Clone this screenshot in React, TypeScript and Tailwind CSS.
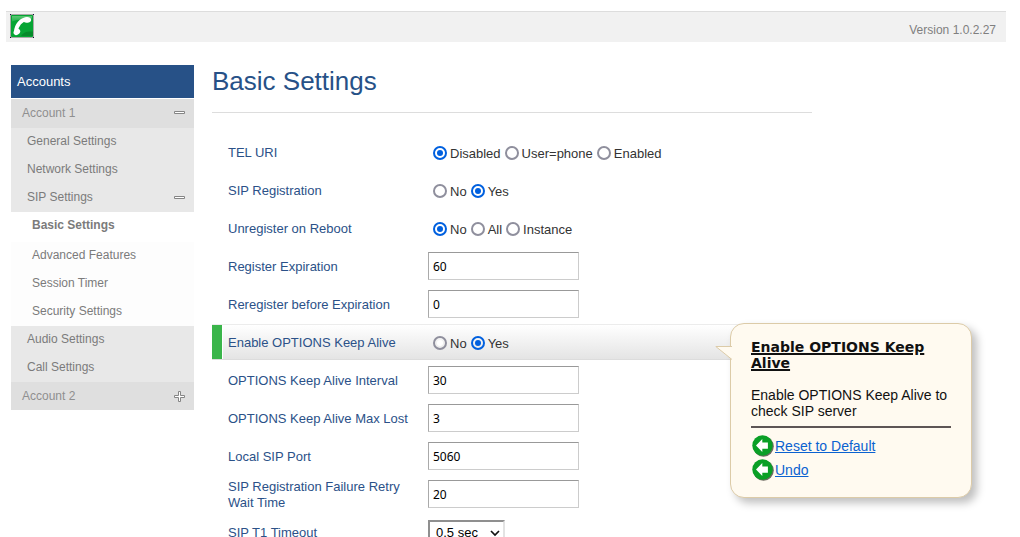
import { useState } from "react";
import type { ReactNode } from "react";

const SANS = "font-['Liberation_Sans',Arial,sans-serif]";

function PhoneLogo() {
  return (
    <svg viewBox="0 0 24 24" className="block size-6" role="img" aria-label="Phone">
      <defs>
        <linearGradient id="logo-shine" x1="0" y1="0" x2="0" y2="1">
          <stop offset="0" stopColor="#5cc873" />
          <stop offset="1" stopColor="#22b14c" />
        </linearGradient>
      </defs>
      <rect width="24" height="24" fill="#111136" />
      <path d="M1 0h22v1h1v22h-1v1H1v-1H0V1h1z" fill="#a9aaa6" />
      <rect x="1" y="1" width="22" height="22" rx="1" fill="#06a534" />
      <path d="M2 2h20v2.500c-5 1-14 .5-20 3z" fill="url(#logo-shine)" />
      <path d="M11 22c2-4 7-5 12-4.500V22z" fill="#058a2a" />
      <path d="M17 5C11 5.500 6.500 11 6 17.500" fill="none" stroke="#fff" strokeWidth="4" strokeLinecap="round" />
      <ellipse cx="17.300" cy="6" rx="3.900" ry="2.700" transform="rotate(-12 17.300 6)" fill="#fff" />
      <ellipse cx="6.900" cy="18" rx="3.600" ry="2.600" transform="rotate(-35 6.900 18)" fill="#fff" />
    </svg>
  );
}

function BackIcon() {
  return (
    <svg viewBox="0 0 22 22" className="block size-[22px] shrink-0" aria-hidden="true">
      <circle cx="11.500" cy="11.500" r="10.300" fill="#6d6a62" />
      <circle cx="10.500" cy="10.500" r="10.200" fill="#0a9f26" />
      <path d="M4 10.500L10.300 4V7.400H15.900V13.800H10.300V17z" fill="#fff" />
    </svg>
  );
}

function ToggleMark({ open }: { open: boolean }) {
  return (
    <svg viewBox="0 0 11 11" className="block size-[11px]" aria-hidden="true">
      <path
        d={open ? "M.5 4.500h10v2h-10z" : "M4.500.5h2v4h4v2h-4v4h-2v-4h-4v-2h4z"}
        fill="#fff"
        stroke="#858585"
      />
    </svg>
  );
}

const menu = [
  { text: "Account 1", style: "h-[29px] bg-[#dfdfdf] pb-0.5 pl-[11px] text-[#8f8f8f]", open: true },
  { text: "General Settings", style: "h-7 bg-[#e8e8e8] pb-0.5 pl-4" },
  { text: "Network Settings", style: "h-7 bg-[#e8e8e8] pb-0.5 pl-4" },
  { text: "SIP Settings", style: "h-7 bg-[#e8e8e8] pb-0.5 pl-4", open: true },
  { text: "Basic Settings", style: "h-[30px] bg-white pb-1 pl-[21px] font-bold" },
  { text: "Advanced Features", style: "h-7 bg-[#fdfdfd] pb-0.5 pl-[21px]" },
  { text: "Session Timer", style: "h-7 bg-[#fdfdfd] pb-0.5 pl-[21px]" },
  { text: "Security Settings", style: "h-7 bg-[#fdfdfd] pb-0.5 pl-[21px]" },
  { text: "Audio Settings", style: "h-7 bg-[#e8e8e8] pb-0.5 pl-4" },
  { text: "Call Settings", style: "h-7 bg-[#e8e8e8] pb-0.5 pl-4" },
  { text: "Account 2", style: "h-7 bg-[#dfdfdf] pl-[11px] text-[#8f8f8f]", open: false },
];

function Sidebar() {
  return (
    <nav className="w-[183px] shrink-0 text-[12px] text-[#7b7b7b]">
      <h2 className="mb-px flex h-[33px] items-center bg-[#275187] pl-1.5 text-[13px] text-white">Accounts</h2>
      <ul>
        {menu.map((m) => (
          <li key={m.text}>
            <a href="#" className={`flex items-center justify-between pr-[9px] ${m.style}`}>
              {m.text}
              {m.open !== undefined && <ToggleMark open={m.open} />}
            </a>
          </li>
        ))}
      </ul>
    </nav>
  );
}

const ROW = "mb-0.5 flex h-9 items-center";
const LABEL = "w-[216px] shrink-0 pt-0.5 pr-5 pl-4 text-[13px] leading-4 text-[#2b5188]";

function RadioRow({ name, options, initial, active, children }: {
  name: string;
  options: string[];
  initial: string;
  active?: boolean;
  children?: ReactNode;
}) {
  const [value, setValue] = useState(initial);
  const look = active
    ? "relative border-t border-b border-t-[#ececec] border-b-[#dcdcdc] bg-linear-to-b from-white to-[#e4e4e4]"
    : "";
  return (
    <div role="radiogroup" aria-label={name} className={`${ROW} ${look}`}>
      {active && <span className="-mr-[11px] w-[11px] self-stretch border-r border-white bg-[#3ab54a]" />}
      <span className={LABEL}>{name}</span>
      <div className="flex items-center gap-1 pt-0.5 pl-[5px] text-[13px] leading-4 text-[#333]">
        {options.map((o) => (
          <label key={o} className="flex items-center gap-[3px]">
            <input
              type="radio"
              name={name}
              checked={value === o}
              onChange={() => setValue(o)}
              className="size-3.5 appearance-none rounded-full border-2 border-[#8f8f9d] bg-white bg-clip-content p-0.5 checked:border-[#0060df] checked:bg-[#0060df]"
            />
            <span className="pt-0.5">{o}</span>
          </label>
        ))}
      </div>
      {children}
    </div>
  );
}

function TextRow({ id, name, value }: { id: string; name: string; value: string }) {
  return (
    <div className={ROW}>
      <label htmlFor={id} className={LABEL}>{name}</label>
      <input
        id={id}
        defaultValue={value}
        className="h-7 w-[151px] border border-t-[#999] border-r-[#ccc] border-b-[#ccc] border-l-[#aaa] bg-white px-1 font-['Noto_Sans',sans-serif] text-[12px] text-black"
      />
    </div>
  );
}

function HelpBubble() {
  return (
    <aside className="absolute -top-0.5 left-[518px] z-10 w-[242px] rounded-[14px] border border-[#dccba8] bg-[#fffaf0] px-5 pt-[15px] pb-4 text-[14px] leading-4 text-[#111] shadow-[5px_5px_8px_rgba(0,0,0,0.25)]">
      <svg viewBox="0 0 17 14" className="absolute top-[22px] -left-4 h-3.5 w-[17px]" aria-hidden="true">
        <path d="M17 .5H.8L17 13.500" fill="#fffaf0" stroke="#dccba8" />
      </svg>
      <h3 className="font-['DejaVu_Sans',sans-serif] text-[14px] font-bold underline decoration-2">
        Enable OPTIONS Keep Alive
      </h3>
      <p className="mt-4">Enable OPTIONS Keep Alive to check SIP server</p>
      <hr className="my-[7px] border-t-2 border-[#5d5555]" />
      <ul className="flex flex-col gap-0.5">
        {["Reset to Default", "Undo"].map((t) => (
          <li key={t}>
            <a href="#" className="flex items-center gap-px pl-px text-[#0b62d0]">
              <BackIcon />
              <span className="underline">{t}</span>
            </a>
          </li>
        ))}
      </ul>
    </aside>
  );
}

export default function App() {
  return (
    <div className={`h-screen overflow-x-hidden overflow-y-auto bg-white pt-[11px] [scrollbar-width:none] ${SANS}`}>
      <header className="mr-3.5 ml-1.5 flex h-[31px] items-center justify-between border-t border-[#ddd] bg-[#f1f1f1] pr-2.5 pl-1">
        <div className="self-start pt-0.5">
          <PhoneLogo />
        </div>
        <span className="pt-1.5 text-[12px] leading-4 text-[#7f7f7f]">Version 1.0.2.27</span>
      </header>
      <div className="flex items-start gap-[18px] pt-[23px] pl-[11px]">
        <Sidebar />
        <main className="max-w-[600px] flex-1">
          <h1 className="mb-[21px] h-12 border-b border-[#ddd] text-[26px] leading-8 text-[#275187]">Basic Settings</h1>
          <form>
            <RadioRow name="TEL URI" options={["Disabled", "User=phone", "Enabled"]} initial="Disabled" />
            <RadioRow name="SIP Registration" options={["No", "Yes"]} initial="Yes" />
            <RadioRow name="Unregister on Reboot" options={["No", "All", "Instance"]} initial="No" />
            <TextRow id="expiration" name="Register Expiration" value="60" />
            <TextRow id="reregister" name="Reregister before Expiration" value="0" />
            <RadioRow name="Enable OPTIONS Keep Alive" options={["No", "Yes"]} initial="Yes" active>
              <HelpBubble />
            </RadioRow>
            <TextRow id="interval" name="OPTIONS Keep Alive Interval" value="30" />
            <TextRow id="max-lost" name="OPTIONS Keep Alive Max Lost" value="3" />
            <TextRow id="sip-port" name="Local SIP Port" value="5060" />
            <TextRow id="retry-wait" name="SIP Registration Failure Retry Wait Time" value="20" />
            <div className={ROW}>
              <label htmlFor="t1" className={LABEL}>SIP T1 Timeout</label>
              <div className="relative">
                <select
                  id="t1"
                  defaultValue="0.5 sec"
                  className="h-6 w-[77px] appearance-none border-2 border-t-[#8f8f8f] border-r-[#e3e3e3] border-b-[#e3e3e3] border-l-[#8f8f8f] bg-white pl-1.5 text-[13px] text-black"
                >
                  <option>0.5 sec</option>
                  <option>1 sec</option>
                  <option>2 sec</option>
                </select>
                <svg viewBox="0 0 10 7" className="pointer-events-none absolute top-2.5 right-[5px] h-[7px] w-2.5" aria-hidden="true">
                  <path d="M1 1L5 5 9 1" fill="none" stroke="#111" strokeWidth="1.700" />
                </svg>
              </div>
            </div>
          </form>
        </main>
      </div>
    </div>
  );
}
